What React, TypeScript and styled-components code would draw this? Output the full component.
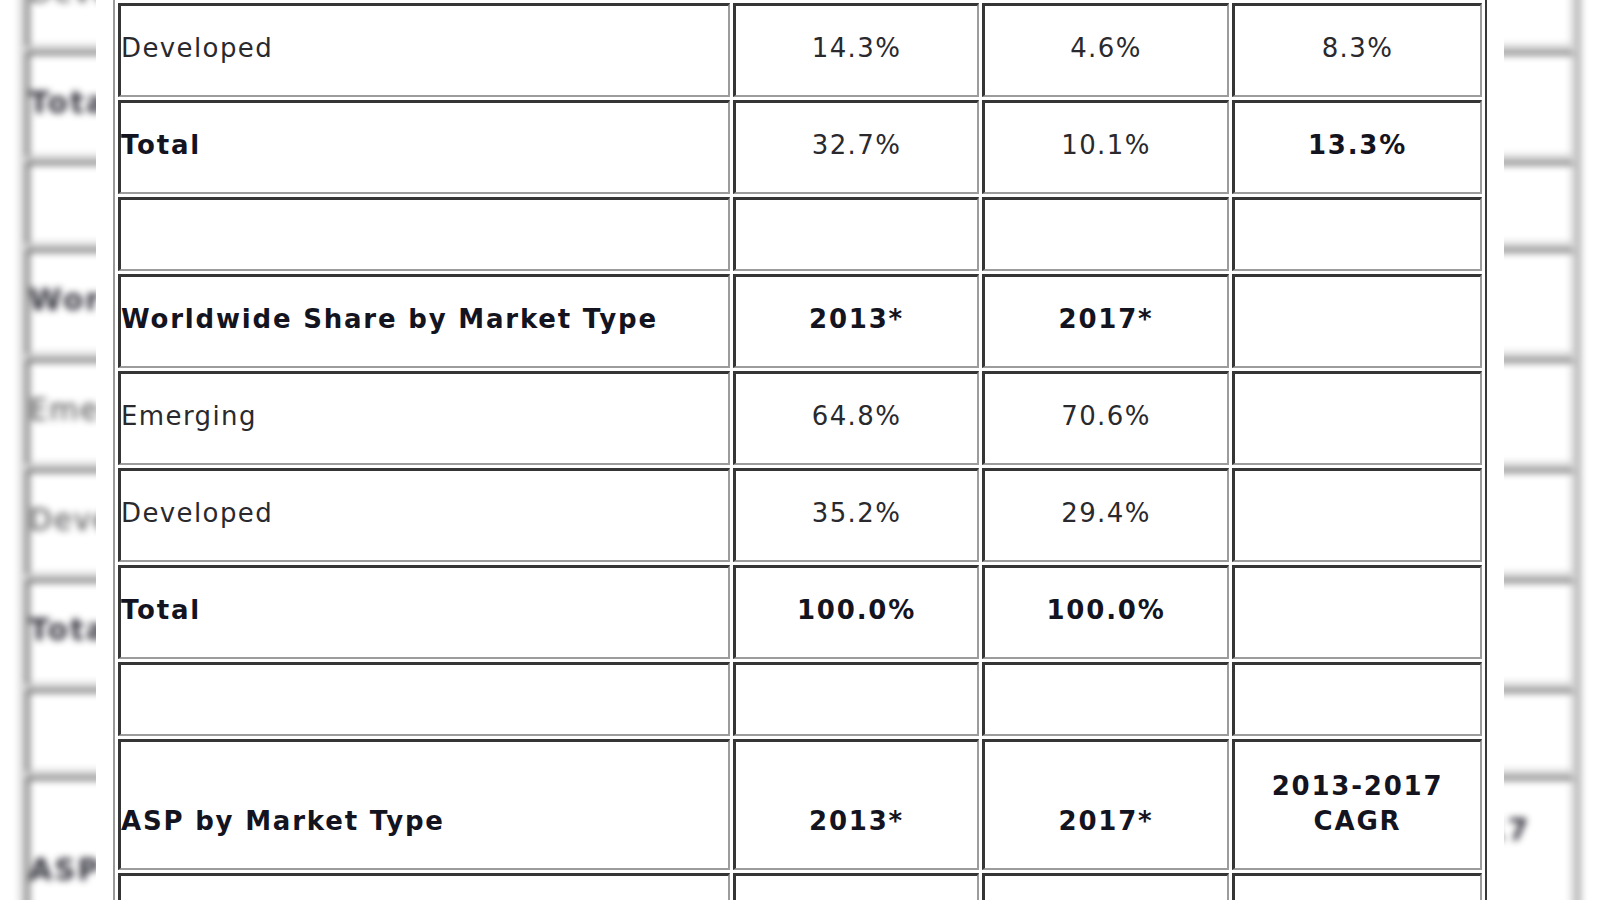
import React from 'react'
import styled, { createGlobalStyle } from 'styled-components'

const GlobalStyle = createGlobalStyle`
  html, body {
    margin: 0;
    padding: 0;
    background: #ffffff;
  }
  body {
    font-family: 'DejaVu Sans', Verdana, 'Liberation Sans', sans-serif;
  }
`

const Stage = styled.div`
  position: relative;
  width: 1600px;
  height: 900px;
  overflow: hidden;
  background: #ffffff;
`

// zoomed, blurred copy of the sheet that shows at both sides
const Backdrop = styled.div`
  position: absolute;
  inset: 0;
  transform: scale(1.135);
  transform-origin: 800px 461px;
  filter: blur(3.5px);
  opacity: 0.88;
  pointer-events: none;
`

const Sheet = styled.div<{ $front?: boolean }>`
  position: relative;
  width: 1408px;
  height: 900px;
  margin: 0 auto;
  background: #ffffff;
  overflow: hidden;
  z-index: ${({ $front }) => ($front ? 1 : 0)};
`

const Table = styled.table`
  width: 1374px;
  margin: -2px auto 0;
  border-collapse: separate;
  border-spacing: 3px;
  border-style: solid;
  border-width: 2px;
  border-color: #9a9a9a #383838 #383838 #9a9a9a;
  table-layout: fixed;
`

const Cell = styled.td<{ $bold?: boolean; $left?: boolean; $empty?: boolean; $tall?: boolean }>`
  border-style: solid;
  border-width: 3px 2px 2px 3px;
  border-color: #353535 #9c9c9c #9c9c9c #353535;
  padding: ${({ $empty, $tall }) => ($empty ? '0' : $tall ? '27px 0 29px 0' : '25px 0 29px 0')};
  height: ${({ $empty }) => ($empty ? '69px' : 'auto')};
  vertical-align: bottom;
  text-align: ${({ $left }) => ($left ? 'left' : 'center')};
  font-size: 26px;
  line-height: 35px;
  letter-spacing: ${({ $bold }) => ($bold ? '1.8px' : '1.4px')};
  font-weight: ${({ $bold }) => ($bold ? 700 : 400)};
  color: ${({ $bold }) => ($bold ? '#141420' : '#2a2a2e')};
  white-space: nowrap;
`

type Value = { text: string; bold?: boolean }
type Row = { cells: Value[]; empty?: boolean }

const v = (text: string, bold = false): Value => ({ text, bold })

const rows: Row[] = [
  { cells: [v('Developed'), v('14.3%'), v('4.6%'), v('8.3%')] },
  { cells: [v('Total', true), v('32.7%'), v('10.1%'), v('13.3%', true)] },
  { cells: [v(''), v(''), v(''), v('')], empty: true },
  {
    cells: [v('Worldwide Share by Market Type', true), v('2013*', true), v('2017*', true), v('')],
  },
  { cells: [v('Emerging'), v('64.8%'), v('70.6%'), v('')] },
  { cells: [v('Developed'), v('35.2%'), v('29.4%'), v('')] },
  { cells: [v('Total', true), v('100.0%', true), v('100.0%', true), v('')] },
  { cells: [v(''), v(''), v(''), v('')], empty: true },
  {
    cells: [
      v('ASP by Market Type', true),
      v('2013*', true),
      v('2017*', true),
      v('2013-2017\nCAGR', true),
    ],
  },
  { cells: [v('Emerging'), v('$286'), v('$247'), v('-3.6%')] },
  { cells: [v('Developed'), v('$541'), v('$470'), v('-3.5%')] },
]

const colWidths = [612, 246, 247, 250]

const DataTable = () => (
  <Table>
    <colgroup>
      {colWidths.map((w, i) => (
        <col key={i} style={{ width: w }} />
      ))}
    </colgroup>
    <tbody>
      {rows.map((row, r) => (
        <tr key={r}>
          {row.cells.map((c, i) => (
            <Cell
              key={i}
              $bold={c.bold}
              $left={i === 0}
              $empty={row.empty}
              $tall={c.text.includes('\n')}
            >
              {c.text.split('\n').map((line, k, all) => (
                <React.Fragment key={k}>
                  {line}
                  {k < all.length - 1 && <br />}
                </React.Fragment>
              ))}
            </Cell>
          ))}
        </tr>
      ))}
    </tbody>
  </Table>
)

const App = () => {
  return (
    <>
      <GlobalStyle />
      <Stage>
        <Backdrop>
          <Sheet>
            <DataTable />
          </Sheet>
        </Backdrop>
        <Sheet $front>
          <DataTable />
        </Sheet>
      </Stage>
    </>
  )
}

export default App
